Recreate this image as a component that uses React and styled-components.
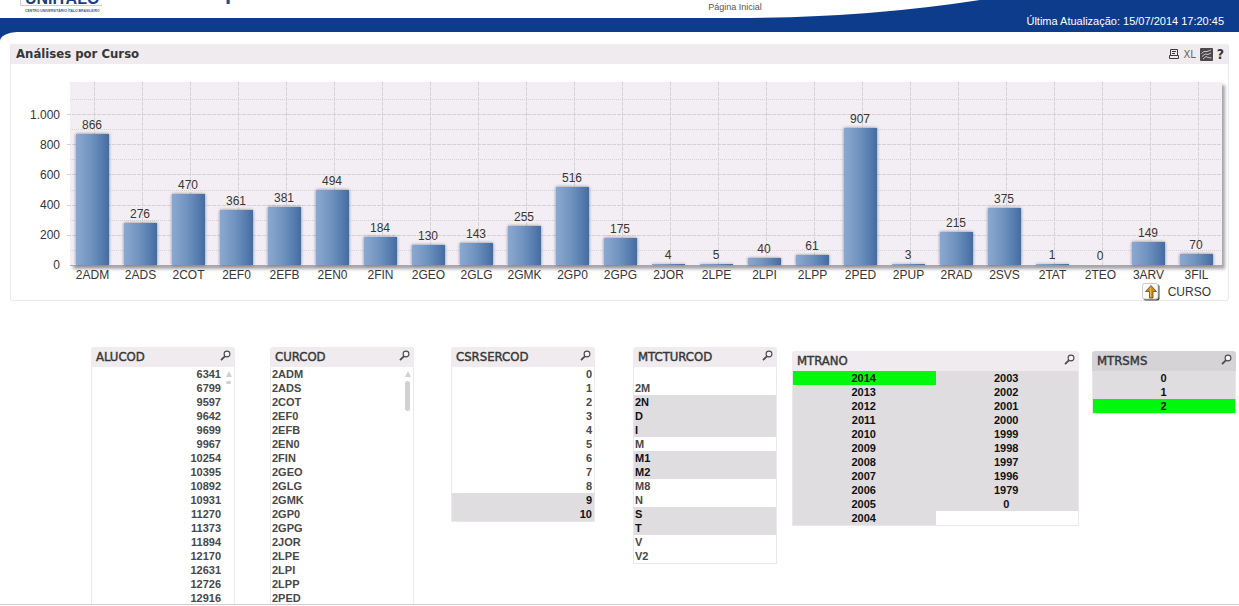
import React from "react";
import styled, { createGlobalStyle, ThemeProvider } from "styled-components";

const theme = {
  blueColor: "#0e3c8c",
  captionColor: "#efebee",
  activeCaptionColor: "#d6d3d6",
  borderColor: "#ebe8eb",
  rowColor: "#e0dde1",
  selectedColor: "#00f80c",
  caption: '"DejaVu Sans Condensed", "DejaVu Sans", sans-serif'
};

const COURSES = [
  ["2ADM", 866],
  ["2ADS", 276],
  ["2COT", 470],
  ["2EF0", 361],
  ["2EFB", 381],
  ["2EN0", 494],
  ["2FIN", 184],
  ["2GEO", 130],
  ["2GLG", 143],
  ["2GMK", 255],
  ["2GP0", 516],
  ["2GPG", 175],
  ["2JOR", 4],
  ["2LPE", 5],
  ["2LPI", 40],
  ["2LPP", 61],
  ["2PED", 907],
  ["2PUP", 3],
  ["2RAD", 215],
  ["2SVS", 375],
  ["2TAT", 1],
  ["2TEO", 0],
  ["3ARV", 149],
  ["3FIL", 70]
];

const TICKS = ["1.000", "800", "600", "400", "200", "0"];
const PLOT_HEIGHT = 184;
const UNIT = 0.151;

const toItems = (text, possible = []) =>
  text.split(" ").map(label => ({ label, state: possible.includes(label) ? "possible" : "plain" }));

const ALUCOD = toItems(
  "6341 6799 9597 9642 9699 9967 10254 10395 10892 10931 11270 11373 11894 12170 12631 12726 12916"
);
const CURCOD = COURSES.slice(0, 17).map(([label]) => ({ label, state: "plain" }));
const CSRSERCOD = toItems("0 1 2 3 4 5 6 7 8 9 10", ["9", "10"]);
const MTCTURCOD = [
  { label: "", state: "plain" },
  ...toItems("2M 2N D I M M1 M2 M8 N S T V V2", ["2N", "D", "I", "M1", "M2", "S", "T"])
];
const MTRANO = [
  { label: "2014", state: "selected" },
  ..."2013 2012 2011 2010 2009 2008 2007 2006 2005 2004 2003 2002 2001 2000 1999 1998 1997 1996 1979 0"
    .split(" ")
    .map(label => ({ label, state: "possible" }))
];
const MTRSMS = [
  { label: "0", state: "possible" },
  { label: "1", state: "possible" },
  { label: "2", state: "selected" }
];

const GlobalStyle = createGlobalStyle`
  * {
    box-sizing: border-box;
  }
  body {
    margin: 0;
    background: #fff;
    color: #363636;
    font-family: "Liberation Sans", Arial, sans-serif;
    font-size: 12px;
  }
  button {
    border: 0;
    padding: 0;
    background: none;
    color: inherit;
    font: inherit;
    cursor: pointer;
  }
`;

const Page = styled.div`
  display: flex;
  flex-direction: column;
  height: 100vh;
  overflow: hidden;
  padding-bottom: 1px;
`;

const Header = styled.header`
  flex: none;
  background: ${props => props.theme.blueColor};
`;

const TopStrip = styled.div`
  position: relative;
  height: 18px;
  overflow: hidden;
`;

const Wave = styled.svg`
  display: block;
  width: 100%;
  height: 18px;
`;

const Logo = styled.svg`
  position: absolute;
  left: 0;
  top: 0;
`;

const PageName = styled.a`
  position: absolute;
  left: 57%;
  top: 0;
  padding-left: 2px;
  font-size: 9px;
  line-height: 14px;
  color: #555;
  text-decoration: none;
`;

const UpdateBar = styled.div`
  display: flex;
  justify-content: flex-end;
  height: 14px;
  padding-right: 15px;
`;

const UpdateText = styled.span`
  color: #fff;
  font-size: 11px;
  line-height: 6px;
`;

const Corner = styled.div`
  flex: none;
  height: 12px;
  background: ${props => props.theme.blueColor};

  &::before {
    content: "";
    display: block;
    height: 12px;
    background: #fff;
    border-radius: 17px 0 0 0 / 9px 0 0 0;
  }
`;

const Panel = styled.section`
  flex: none;
  margin: 0 10px;
  border: 1px solid ${props => props.theme.borderColor};
  border-top: 0;
  border-radius: 3px;
`;

const Caption = styled.div`
  display: flex;
  flex: none;
  align-items: center;
  justify-content: space-between;
  height: 20px;
  padding: 0 4px 0 5px;
  background: ${props => (props.$active ? props.theme.activeCaptionColor : props.theme.captionColor)};
`;

const CaptionText = styled.h2`
  margin: 0;
  font-family: ${props => props.theme.caption};
  font-size: 13px;
  font-weight: ${props => (props.$large ? 700 : 400)};
  line-height: 18px;
  -webkit-text-stroke: ${props => (props.$large ? "0" : "0.4px")};
`;

const Tools = styled.div`
  display: flex;
  align-items: center;
  gap: 4px;
  height: 18px;
`;

const ToolButton = styled.button`
  display: flex;
  align-items: center;
  height: 14px;
  font-family: ${props => props.theme.caption};
  font-size: ${props => (props.$bold ? "14px" : "11px")};
  font-weight: ${props => (props.$bold ? 700 : 400)};
  color: ${props => (props.$bold ? "#363636" : "#666")};
`;

const Chart = styled.div`
  display: flex;
  padding: 18px 6px 0 0;
`;

const YAxis = styled.div`
  width: 59px;
  padding: 18px 10px 0 0;
  text-align: right;
`;

const YTick = styled.div`
  line-height: 30px;
`;

const PlotColumn = styled.div`
  flex: 1;
`;

const Plot = styled.div`
  position: relative;
  height: ${PLOT_HEIGHT}px;
  background: #f2eef3;
  border-bottom: 1px solid #a9a6ab;
  box-shadow: 3px 3px 3px rgba(60, 55, 65, 0.45);
`;

const GridLines = styled.svg`
  position: absolute;
  left: 0;
  top: 0;
  width: 100%;
  height: 100%;
  overflow: visible;
`;

const Bars = styled.div`
  position: relative;
  display: grid;
  grid-template-columns: repeat(24, 1fr);
  height: 100%;
`;

const BarCell = styled.div`
  display: flex;
  flex-direction: column;
  align-items: center;
  justify-content: flex-end;
  padding-right: 4px;
`;

const BarValue = styled.span`
  line-height: 18px;
`;

const Bar = styled.div`
  width: 33px;
  background: linear-gradient(90deg, #8aa7d0 0%, #7899c5 35%, #5d83b3 70%, #466c9f 100%);
  box-shadow: ${props => (props.$empty ? "none" : "0 0 3px rgba(60, 55, 65, 0.6)")};
`;

const XAxis = styled.div`
  display: grid;
  grid-template-columns: repeat(24, 1fr);
  line-height: 18px;
  text-align: center;
`;

const XLabel = styled.span`
  padding-right: 3px;
`;

const Legend = styled.div`
  display: flex;
  align-items: center;
  justify-content: flex-end;
  gap: 8px;
  height: 16px;
  padding-right: 17px;
`;

const DrillButton = styled.button`
  display: flex;
`;

const Lists = styled.main`
  display: grid;
  flex: 1;
  grid-template-columns: 179fr 181fr 182fr 159fr 300fr 147fr;
  grid-template-rows: 100%;
  min-height: 0;
  margin-top: 24px;
  padding: 22px 0 0 91px;
  border-bottom: 1px solid #cfcccf;
  overflow: hidden;
`;

const ListBox = styled.section`
  display: flex;
  flex-direction: column;
  align-self: ${props => (props.$fill ? "stretch" : "start")};
  width: ${props => (props.$columns === 2 ? "287px" : "144px")};
  margin-top: ${props => (props.$low ? "4px" : "0")};
  border-radius: 3px 3px 0 0;
  overflow: hidden;
`;

const ListBody = styled.div`
  display: flex;
  flex: 1;
  min-height: 0;
  border: 1px solid ${props => props.theme.borderColor};
  border-top: 0;
  border-bottom-width: ${props => (props.$fill ? "0" : "1px")};
`;

const Items = styled.ul`
  display: grid;
  flex: 1;
  grid-auto-flow: ${props => (props.$columns === 2 ? "column" : "row")};
  grid-template-rows: ${props => (props.$columns === 2 ? "repeat(11, 14px)" : "none")};
  grid-auto-columns: 1fr;
  grid-auto-rows: 14px;
  margin: 0;
  padding: 0;
  list-style: none;
  text-align: ${props => props.$align};
`;

const ROW_COLORS = { plain: "#fff", possible: theme.rowColor, selected: theme.selectedColor };

const Item = styled.li`
  padding: 0 2px 0 1px;
  background: ${props => ROW_COLORS[props.$state]};
  color: ${props => (props.$state === "plain" ? "#484848" : "#111")};
  font-size: 11px;
  font-weight: 700;
  line-height: 14px;
`;

const ScrollBar = styled.div`
  display: flex;
  flex-direction: column;
  align-items: center;
  gap: 4px;
  width: 11px;
  padding-top: 4px;
`;

const Arrow = styled.div`
  border: 3px solid transparent;
  border-top: 0;
  border-bottom: 6px solid #d3d0d4;
`;

const Thumb = styled.div`
  width: 5px;
  height: ${props => (props.$short ? "3px" : "30px")};
  border-radius: 3px;
  background: #d3d0d4;
`;

const SearchIcon = () =>
  <svg width="11" height="12" viewBox="0 0 11 12" fill="none" stroke="#4a4a4a">
    <circle cx="7" cy="4" r="2.9" fill="#f6f4f6" strokeWidth="1.1" />
    <path d="M4.8 6.4 1 10.2" strokeWidth="1.8" />
  </svg>;

const PrintIcon = () =>
  <svg width="10" height="10" viewBox="0 0 10 10" fill="none" stroke="#3c3c3c">
    <path d="M1.5 6.5V.5h7v6M3 2.5h4M3 4.5h3M.5 6.5h9v3h-9z" />
  </svg>;

const ClearIcon = () =>
  <svg width="13" height="13" viewBox="0 0 13 13" fill="none">
    <rect width="13" height="13" rx="1" fill="#4b494c" />
    <path
      d="M1.5 5.5 4 3.5 7 3.5 11 2M2 8.5 5 6 8 6.5 11 5M3 11 6 8.5 8 9.5 11.5 10"
      stroke="#c9c6ca"
    />
  </svg>;

const DrillIcon = () =>
  <svg width="18" height="18" viewBox="0 0 18 18">
    <rect x="1.5" y="1.5" width="16" height="16" rx="2" fill="#444" />
    <rect x="0.5" y="0.5" width="15.5" height="15.5" rx="2" fill="#fcfbfb" stroke="#ccc" />
    <path d="M9 2.5 14.5 8.5H11V15H7.5V8.5H3.5z" fill="#c98a1b" stroke="#6f4b12" strokeWidth="0.8" />
    <path d="M8.6 4.5V14" stroke="#f1c65c" />
  </svg>;

const ListPanel = ({ title, items, align = "left", columns = 1, scroll, low, active }) =>
  <ListBox $fill={!!scroll} $low={low} $columns={columns}>
    <Caption $active={active}>
      <CaptionText>{title}</CaptionText>
      <button type="button" aria-label={`Pesquisar ${title}`}>
        <SearchIcon />
      </button>
    </Caption>
    <ListBody $fill={!!scroll}>
      <Items $align={align} $columns={columns}>
        {items.map((item, idx) =>
          <Item key={idx} $state={item.state}>
            {item.label}
          </Item>
        )}
      </Items>
      {scroll &&
        <ScrollBar>
          <Arrow />
          <Thumb $short={scroll === "short"} />
        </ScrollBar>}
    </ListBody>
  </ListBox>;

const ChartGrid = () =>
  <GridLines>
    {Array.from({ length: 11 }, (_, idx) => {
      const y = Math.round(PLOT_HEIGHT - (idx + 1) * 100 * UNIT) - 0.5;
      const major = idx % 2 === 1;
      return (
        <line
          key={idx}
          x1={major ? -3 : 0}
          x2="100%"
          y1={y}
          y2={y}
          stroke="#d5d1d7"
          strokeDasharray={major ? "4 1" : "1 1"}
        />
      );
    })}
    {COURSES.map(([name], idx) =>
      <line
        key={name}
        x1={`${(idx + 0.5) / 24 * 100}%`}
        x2={`${(idx + 0.5) / 24 * 100}%`}
        y1="0"
        y2="100%"
        stroke="#d5d1d7"
        strokeDasharray="4 1"
        shapeRendering="crispEdges"
      />
    )}
  </GridLines>;

const App = () =>
  <ThemeProvider theme={theme}>
    <GlobalStyle />
    <Page>
      <Header>
        <TopStrip>
          <Wave viewBox="0 0 1239 18" preserveAspectRatio="none">
            <path d="M0 0H980Q870 17 750 18H0z" fill="#fff" />
          </Wave>
          <Logo width="240" height="18" viewBox="0 0 240 18">
            <path d="M20.5 0V5.5H102" fill="none" stroke="#c3cce0" />
            <text x="25" y="4" fontSize="16" fontWeight="700" fill="#1b3f85">
              UNIÍTALO
            </text>
            <text x="25" y="12" fontSize="3.4" fontWeight="700" fill="#3d5790">
              CENTRO UNIVERSITÁRIO ÍTALO BRASILEIRO
            </text>
            <text x="225" y="-1" fontSize="22" fontWeight="700" fill="#1b4f95">
              p
            </text>
          </Logo>
          <PageName href="#inicio">Página Inicial</PageName>
        </TopStrip>
        <UpdateBar>
          <UpdateText>Última Atualização: 15/07/2014 17:20:45</UpdateText>
        </UpdateBar>
      </Header>
      <Corner />

      <Panel>
        <Caption>
          <CaptionText $large>Análises por Curso</CaptionText>
          <Tools>
            <ToolButton type="button" aria-label="Imprimir">
              <PrintIcon />
            </ToolButton>
            <ToolButton type="button">XL</ToolButton>
            <ToolButton type="button" aria-label="Limpar">
              <ClearIcon />
            </ToolButton>
            <ToolButton type="button" $bold>?</ToolButton>
          </Tools>
        </Caption>
        <Chart>
          <YAxis>
            {TICKS.map(tick => <YTick key={tick}>{tick}</YTick>)}
          </YAxis>
          <PlotColumn>
            <Plot>
              <ChartGrid />
              <Bars>
                {COURSES.map(([name, value]) =>
                  <BarCell key={name}>
                    <BarValue>{value}</BarValue>
                    <Bar $empty={value === 0} style={{ height: Math.ceil(value * UNIT) }} />
                  </BarCell>
                )}
              </Bars>
            </Plot>
            <XAxis>
              {COURSES.map(([name]) => <XLabel key={name}>{name}</XLabel>)}
            </XAxis>
          </PlotColumn>
        </Chart>
        <Legend>
          <DrillButton type="button" aria-label="Subir nível">
            <DrillIcon />
          </DrillButton>
          <span>CURSO</span>
        </Legend>
      </Panel>

      <Lists>
        <ListPanel title="ALUCOD" items={ALUCOD} align="right" scroll="short" />
        <ListPanel title="CURCOD" items={CURCOD} scroll="long" />
        <ListPanel title="CSRSERCOD" items={CSRSERCOD} align="right" />
        <ListPanel title="MTCTURCOD" items={MTCTURCOD} />
        <ListPanel title="MTRANO" items={MTRANO} align="center" columns={2} low />
        <ListPanel title="MTRSMS" items={MTRSMS} align="center" low active />
      </Lists>
    </Page>
  </ThemeProvider>;

export default App;
